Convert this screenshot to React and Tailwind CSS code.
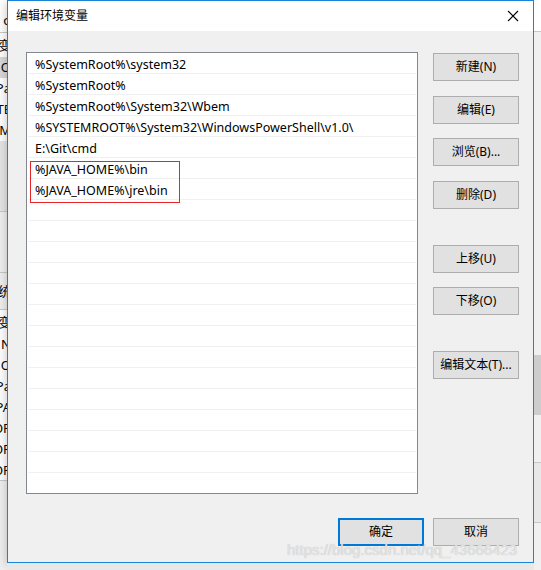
import React from 'react';

const font = { fontFamily: '"Noto Sans", "Noto Sans CJK SC", sans-serif' };

export default function App() {
  const paths = [
    '%SystemRoot%\\system32',
    '%SystemRoot%',
    '%SystemRoot%\\System32\\Wbem',
    '%SYSTEMROOT%\\System32\\WindowsPowerShell\\v1.0\\',
    'E:\\Git\\cmd',
    '%JAVA_HOME%\\bin',
    '%JAVA_HOME%\\jre\\bin',
  ];
  const rows = [...paths, ...Array(14).fill('')];

  const sideButtons = [
    { label: '新建(N)', mt: 'mt-px' },
    { label: '编辑(E)', mt: 'mt-[15px]' },
    { label: '浏览(B)...', mt: 'mt-[14px]' },
    { label: '删除(D)', mt: 'mt-[15px]' },
    { label: '上移(U)', mt: 'mt-[36px]' },
    { label: '下移(O)', mt: 'mt-[14px]' },
    { label: '编辑文本(T)...', mt: 'mt-[36px]' },
  ];

  const leftBits = [
    { t: 'o', h: 'h-[33px]', cls: 'border-b border-[#c8c8c8] bg-white pt-[8px]' },
    { t: '变', h: 'h-[24px]', cls: '' },
    { t: 'O', h: 'h-[21px]', cls: 'bg-[#d9d9d9]' },
    { t: 'Pa', h: 'h-[21px]', cls: '' },
    { t: 'TE', h: 'h-[21px]', cls: '' },
    { t: 'TM', h: 'h-[21px]', cls: '' },
    { t: '', h: 'h-[71px]', cls: 'border-b border-[#c8c8c8] bg-[#e6e6e6]' },
    { t: '', h: 'h-[61px]', cls: 'border-b border-[#c8c8c8] bg-[#f0f0f0]' },
    { t: '统', h: 'h-[37px]', cls: 'border-b border-[#c8c8c8] bg-[#f0f0f0]' },
    { t: '变', h: 'h-[24px]', cls: '' },
    { t: 'N', h: 'h-[21px]', cls: '' },
    { t: 'O', h: 'h-[21px]', cls: '' },
    { t: 'Pa', h: 'h-[21px]', cls: '' },
    { t: 'PA', h: 'h-[21px]', cls: '' },
    { t: 'OP', h: 'h-[21px]', cls: '' },
    { t: 'OP', h: 'h-[21px]', cls: '' },
    { t: 'OP', h: 'h-[21px]', cls: 'border-b border-[#c8c8c8]' },
  ];

  return (
    <div className="w-[541px] h-[570px] overflow-hidden bg-[#f0f0f0] flex relative" style={font}>
      {/* background window, left edge */}
      <div className="w-[7px] shrink-0 flex flex-col overflow-hidden bg-white text-[13px] text-black">
        {leftBits.map((b, i) => (
          <div key={i} className={`${b.h} ${b.cls} shrink-0 flex items-center justify-end whitespace-nowrap leading-none`}>
            <span className="-mr-[4px]">{b.t}</span>
          </div>
        ))}
        <div className="flex-1 bg-[#f0f0f0]"></div>
      </div>

      {/* dialog */}
      <div className="w-[527px] shrink-0 flex flex-col">
        <div className="h-[563px] border border-[#1883d7] bg-[#f0f0f0] flex flex-col shadow-[0_2px_10px_rgba(0,0,0,0.25)]">
          <div className="h-[30px] bg-white flex items-center justify-between pl-[8px] pr-[14px]">
            <span className="text-[12px] text-black">编辑环境变量</span>
            <svg width="12" height="12" viewBox="0 0 12 12">
              <path d="M1 1L11 11M11 1L1 11" stroke="#000" strokeWidth="1.1" />
            </svg>
          </div>

          <div className="flex-1 pl-[18px] pt-[21px]">
            <div className="flex">
              {/* list box */}
              <div className="w-[392px] h-[442px] border border-[#828790] bg-white px-px overflow-hidden relative">
                {rows.map((r, i) => (
                  <div
                    key={i}
                    className="h-[21px] border-b border-[#f0f0f0] pl-[7px] pt-[4px] flex items-center text-[12.5px] text-black whitespace-nowrap"
                  >
                    {r}
                  </div>
                ))}
                <div className="absolute left-[3px] top-[108px] w-[150px] h-[42px] border border-[#e8262a]"></div>
              </div>

              {/* side buttons */}
              <div className="ml-[15px] w-[86px] flex flex-col">
                {sideButtons.map((b, i) => (
                  <button
                    key={i}
                    className={`${b.mt} h-[28px] w-[86px] border border-[#adadad] bg-[#e1e1e1] text-[12px] text-black flex items-center justify-center`}
                  >
                    {b.label}
                  </button>
                ))}
              </div>
            </div>

            {/* bottom buttons */}
            <div className="mt-[24px] flex pl-[312px] gap-[9px]">
              <button className="h-[28px] w-[86px] border-2 border-[#0078d7] bg-[#e1e1e1] text-[12px] text-black flex items-center justify-center">
                确定
              </button>
              <button className="h-[28px] w-[86px] border border-[#adadad] bg-[#e1e1e1] text-[12px] text-black flex items-center justify-center">
                取消
              </button>
            </div>
          </div>
        </div>
        <div className="flex-1 bg-[#e8e8e8]"></div>
      </div>

      {/* background window, right edge */}
      <div className="w-[7px] shrink-0 flex flex-col bg-[#f0f0f0]">
        <div className="h-[32px] bg-white border-b border-[#c8c8c8]"></div>
        <div className="h-[323px] bg-[#f0f0f0]"></div>
        <div className="h-[60px] bg-[#cdcdcd]"></div>
        <div className="h-[48px] bg-[#f0f0f0] border-b border-[#c8c8c8]"></div>
        <div className="h-[60px] bg-[#e8e8e8] border-b border-[#c8c8c8]"></div>
        <div className="flex-1 bg-[#f0f0f0]"></div>
      </div>

      {/* watermark */}
      <div
        className="absolute left-[287px] top-[539px] text-[15px] text-[#e4e4e4] whitespace-nowrap [text-shadow:0_0_1px_#b8b8b8]"
        style={{ fontFamily: '"Liberation Sans", Arial, sans-serif' }}
      >
        https://blog.csdn.net/qq_43666423
      </div>
    </div>
  );
}
